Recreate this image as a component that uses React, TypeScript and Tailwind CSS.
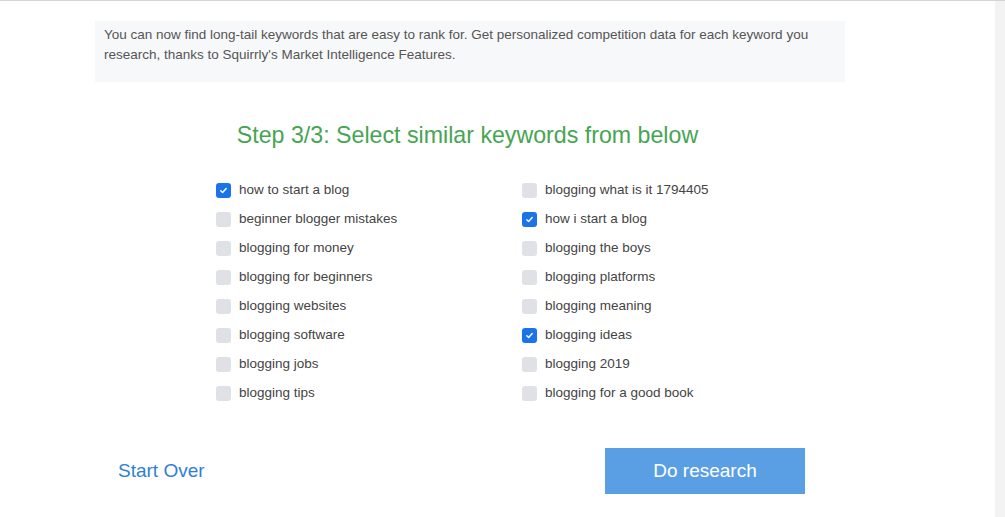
import { useState } from 'react'

const left = [
  ['how to start a blog', true],
  ['beginner blogger mistakes', false],
  ['blogging for money', false],
  ['blogging for beginners', false],
  ['blogging websites', false],
  ['blogging software', false],
  ['blogging jobs', false],
  ['blogging tips', false],
] as const

const right = [
  ['blogging what is it 1794405', false],
  ['how i start a blog', true],
  ['blogging the boys', false],
  ['blogging platforms', false],
  ['blogging meaning', false],
  ['blogging ideas', true],
  ['blogging 2019', false],
  ['blogging for a good book', false],
] as const

function Keyword({ label, initial }: { label: string; initial: boolean }) {
  const [checked, setChecked] = useState(initial)
  return (
    <label className="flex h-[29px] cursor-pointer items-center gap-[8px]" onClick={() => setChecked(!checked)}>
      <span
        className={
          checked
            ? 'flex h-[15px] w-[15px] items-center justify-center rounded-[3px] bg-[#1a73e8]'
            : 'flex h-[15px] w-[15px] items-center justify-center rounded-[3px] bg-[#dfe1e6]'
        }
      >
        {checked && (
          <svg width="9" height="9" viewBox="0 0 10 10" fill="none">
            <path d="M2 5.2l2 2 4-4.4" stroke="white" strokeWidth="1.6" strokeLinecap="round" strokeLinejoin="round" />
          </svg>
        )}
      </span>
      <span className="text-[13.5px] text-[#444]">{label}</span>
    </label>
  )
}

export default function App() {
  return (
    <div className="flex h-[517px] w-[1005px] border-t border-[#d4d4d4] bg-white font-['Liberation_Sans',Arial,sans-serif]">
      <div className="flex w-[995px] flex-col">
        <div className="ml-[95px] mt-[20px] w-[750px] bg-[#f7f8fa] px-[9px] pb-[17px] pt-[4px] text-[13.5px] leading-[20px] text-[#555]">
          You can now find long-tail keywords that are easy to rank for. Get personalized competition data for each keyword you
          research, thanks to Squirrly's Market Intelligence Features.
        </div>
        <h2 className="ml-[90px] mt-[36px] w-[755px] text-center text-[23.2px] leading-[34px] text-[#46a552]">
          Step 3/3: Select similar keywords from below
        </h2>
        <div className="ml-[216px] mt-[24px] flex">
          <div className="flex w-[306px] flex-col">
            {left.map(([l, c]) => (
              <Keyword key={l} label={l} initial={c} />
            ))}
          </div>
          <div className="flex flex-col">
            {right.map(([l, c]) => (
              <Keyword key={l} label={l} initial={c} />
            ))}
          </div>
        </div>
        <div className="ml-[118px] mt-[40px] flex w-[687px] items-center justify-between">
          <button className="text-[19px] text-[#2f7fd4]">Start Over</button>
          <button className="h-[46px] w-[200px] bg-[#5a9fe3] text-[19px] text-white">Do research</button>
        </div>
      </div>
      <div className="flex-1 bg-[#f3f3f3]" />
    </div>
  )
}
